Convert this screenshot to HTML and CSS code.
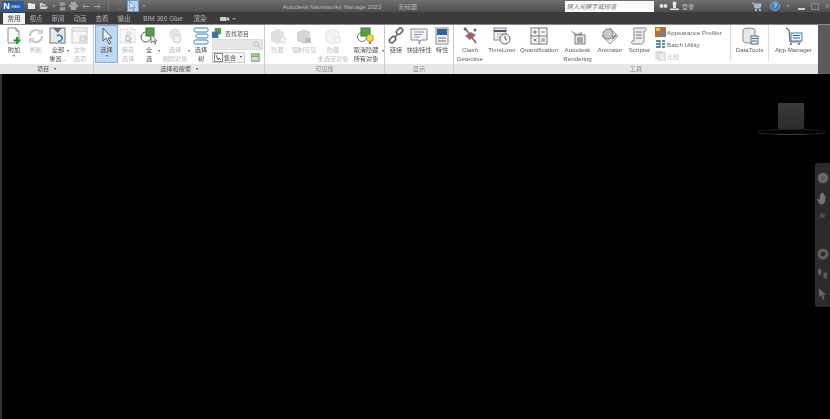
FILE: index.html
```html
<!DOCTYPE html>
<html lang="zh">
<head>
  <meta charset="UTF-8">
  <title>Autodesk Navisworks Manage 2023</title>
  <link rel="stylesheet" href="styles.css">
</head>
<body>
  <!-- Title bar -->
  <div class="titlebar">
    <div class="logo"><span class="logo-n">N</span><span class="logo-man">MAN</span></div>
    <div class="quick">
      <svg width="9" height="8" viewBox="0 0 10 9"><path d="M1 1h3l1 1h4v6H1z" fill="#e8e8e8"/></svg>
      <svg width="10" height="8" viewBox="0 0 12 9"><path d="M1 1h3l1 1h3v2H3L1 8zM3 5h8l-2 3H1z" fill="#cfcfcf"/></svg>
      <span class="dot"></span>
      <svg width="7" height="9" viewBox="0 0 9 10"><path d="M1 0h7v4H1zM1 6h7v4H1z" fill="#9a9a9a"/></svg>
      <svg width="9" height="8" viewBox="0 0 10 9"><path d="M2 0h6v3H2zM0 3h10v3H0zM2 6h6v3H2z" fill="#a5a5a5"/></svg>
      <svg class="undo" width="8" height="7" viewBox="0 0 10 8"><path d="M9 4H2M4 1 1 4l3 3" fill="none" stroke="#a8a8a8" stroke-width="1.2"/></svg>
      <svg width="8" height="7" viewBox="0 0 10 8"><path d="M1 4h7M6 1l3 3-3 3" fill="none" stroke="#a8a8a8" stroke-width="1.2"/></svg>
      <span class="qsep"></span>
      <svg width="8" height="8" viewBox="0 0 10 10"><path d="M8 2A4 4 0 0 0 1 5M2 8a4 4 0 0 0 7-3" fill="none" stroke="#777" stroke-width="1.2"/></svg>
      <span class="qselect"><svg width="7" height="10" viewBox="0 0 8 11"><path d="M1 0v9l2-2 2 4 1-1-2-3h3z" fill="#eef3f8" stroke="#45617e" stroke-width=".6"/></svg></span>
      <span class="dot small"></span>
    </div>
    <div class="apptitle">Autodesk Navisworks Manage 2023<span class="doc">无标题</span></div>
    <div class="search">键入关键字或短语</div>
    <div class="account">
      <svg width="9" height="9" viewBox="0 0 9 9"><circle cx="2.5" cy="4" r="2" fill="#ddd"/><circle cx="6.5" cy="4" r="2" fill="#ddd"/></svg>
      <svg width="9" height="10" viewBox="0 0 9 10"><circle cx="4.5" cy="2.5" r="2" fill="#e4e4e4"/><path d="M0 9h9V7.5H0zM3 4h3v3H3z" fill="#e4e4e4"/></svg>
      <span class="login">登录</span>
    </div>
    <div class="winctl">
      <svg width="10" height="9" viewBox="0 0 10 9"><path d="M0 1h2l1 5h5l1-4H3" fill="#8fb6de" stroke="#cfe0f0" stroke-width=".6"/><circle cx="4" cy="8" r="1" fill="#ddd"/><circle cx="8" cy="8" r="1" fill="#ddd"/></svg>
      <svg class="help" width="10" height="10" viewBox="0 0 11 11"><circle cx="5.5" cy="5.5" r="5" fill="#3f7fc4" stroke="#ccc" stroke-width=".6"/><text x="5.5" y="8.2" font-size="8" text-anchor="middle" fill="#fff" font-family="Liberation Sans">?</text></svg>
      <span class="dot small"></span>
      <span class="min"></span>
      <span class="max"></span>
      <span class="close">×</span>
    </div>
  </div>

  <!-- Tabs -->
  <div class="tabs">
    <span class="tab active">常用</span>
    <span class="tab">视点</span>
    <span class="tab">审阅</span>
    <span class="tab">动画</span>
    <span class="tab">查看</span>
    <span class="tab">输出</span>
    <span class="tab wide">BIM 360 Glue</span>
    <span class="tab">渲染</span>
    <span class="tab cam"><svg width="10" height="6" viewBox="0 0 12 7"><rect x="0" y="1" width="8" height="5" rx="1" fill="#ccc"/><path d="M8 3l3-2v5L8 4z" fill="#ccc"/></svg><span class="dot small"></span></span>
  </div>

  <!-- Ribbon -->
  <div class="ribbon">
    <section class="panel p-project">
      <div class="tools">
        <div class="btn w22">
          <svg class="ico" width="18" height="18" viewBox="0 0 18 18"><path d="M3 1h8l3 3v12H3z" fill="#fdfdfd" stroke="#8c8c8c"/><path d="M11 1v3h3" fill="#ddd" stroke="#8c8c8c"/><path d="M12 10v7M8.500 13.500h7" stroke="#1a9c2c" stroke-width="2.200"/></svg>
          <span>附加</span><i class="caret"></i>
        </div>
        <div class="btn w22 off">
          <svg class="ico" width="18" height="18" viewBox="0 0 18 18"><g fill="none" stroke="#c4c4c4" stroke-width="2"><path d="M3 9a6 6 0 0 1 10-4.500"/><path d="M15 9a6 6 0 0 1-10 4.500"/></g><path d="M16 1v6h-6zM2 17v-6h6z" fill="#d2d2d2"/></svg>
          <span>刷新</span>
        </div>
        <div class="btn w22">
          <svg class="ico" width="18" height="18" viewBox="0 0 18 18"><rect x="1" y="1" width="15" height="15" fill="#e9e9e9" stroke="#777"/><path d="M4 1h9l-4.500 5z" fill="#6a7480"/><path d="M9 14a3 3 0 1 0-1-5" fill="none" stroke="#2f7fc4" stroke-width="1.500"/></svg>
          <span>全部<br>重置...</span><i class="caret side"></i>
        </div>
        <div class="btn w22 off">
          <svg class="ico" width="18" height="18" viewBox="0 0 18 18"><rect x="1" y="1" width="15" height="15" fill="#f6f6f6" stroke="#c8c8c8"/><path d="M1 4h15" stroke="#d0d0d0"/><rect x="9" y="9" width="6" height="5" fill="#e2e2e2" stroke="#c8c8c8"/></svg>
          <span>文件<br>选项</span>
        </div>
      </div>
      <div class="plabel">项目 <i class="caret dark"></i></div>
    </section>

    <section class="panel p-select">
      <div class="tools">
        <div class="btn w23 selected">
          <svg class="ico" width="18" height="18" viewBox="0 0 18 18"><path d="M5 1v13l3-3 3 6 2-1-3-5h4z" fill="#eef1f4" stroke="#5a5f66"/></svg>
          <span>选择</span><i class="caret"></i>
        </div>
        <div class="btn w20 off">
          <svg class="ico" width="18" height="18" viewBox="0 0 18 18"><rect x="1" y="2" width="15" height="14" fill="#f7f7f7" stroke="#d2d2d2" stroke-dasharray="2 1"/><circle cx="10" cy="7" r="3" fill="#e4e4e4"/><path d="M7 8v7l2-2 2 3 1-1-2-3h3z" fill="#eee" stroke="#bbb"/></svg>
          <span>保存<br>选择</span>
        </div>
        <div class="btn w22">
          <svg class="ico" width="18" height="18" viewBox="0 0 18 18"><circle cx="6" cy="10" r="5" fill="#fff" stroke="#555"/><rect x="6" y="1" width="8" height="8" fill="#56a04a" stroke="#3b7a33"/><path d="M11 7v9l2-2 2 3 1-1-2-2h3z" fill="#e8e8e8" stroke="#555" stroke-width=".7"/></svg>
          <span>全<br>选</span><i class="caret side"></i>
        </div>
        <div class="btn w30 off">
          <svg class="ico" width="18" height="18" viewBox="0 0 18 18"><circle cx="9" cy="7" r="6" fill="#e6e6e6"/><circle cx="11" cy="12" r="4" fill="#efefef" stroke="#d0d0d0"/></svg>
          <span>选择<br>相同对象</span><i class="caret side"></i>
        </div>
        <div class="btn w22">
          <svg class="ico" width="18" height="18" viewBox="0 0 18 18"><rect x="2" y="1" width="14" height="4" rx="1.500" fill="#fff" stroke="#2f7fc4"/><rect x="4" y="7" width="12" height="4" rx="1.500" fill="#fff" stroke="#2f7fc4"/><rect x="2" y="13" width="14" height="4" rx="1.500" fill="#fff" stroke="#2f7fc4"/></svg>
          <span>选择<br>树</span>
        </div>
        <div class="findcol">
          <div class="findrow">
            <svg width="10" height="10" viewBox="0 0 11 11"><rect x="3" y="0" width="7" height="7" fill="#56a04a"/><rect x="0" y="4" width="7" height="7" fill="#3f6fa8"/></svg>
            <span>查找项目</span>
          </div>
          <div class="findbox"><svg width="8" height="8" viewBox="0 0 8 8"><circle cx="3" cy="3" r="2.300" fill="none" stroke="#bbb"/><path d="M5 5l3 3" stroke="#bbb"/></svg></div>
          <div class="setrow">
            <div class="setbox">
              <svg width="9" height="9" viewBox="0 0 9 9"><rect x=".5" y=".5" width="8" height="8" fill="#fff" stroke="#888"/><path d="M2 2l2 5 1-2 2 2" fill="none" stroke="#666"/></svg>
              <span>集合</span><i class="caret dark"></i>
            </div>
            <svg width="9" height="9" viewBox="0 0 10 10"><rect x="0" y="1" width="9" height="8" fill="#cfe3c8" stroke="#4d8a45"/><path d="M0 3.500h9" stroke="#4d8a45"/></svg>
          </div>
        </div>
      </div>
      <div class="plabel">选择和搜索 <i class="caret dark"></i></div>
    </section>

    <section class="panel p-vis">
      <div class="tools">
        <div class="btn w25 off">
          <svg class="ico" width="18" height="18" viewBox="0 0 18 18"><path d="M2 5l7-3 6 3v9l-6 3-7-3z" fill="#e0e0e0"/><circle cx="14" cy="13" r="3" fill="#f2f2f2" stroke="#d8d8d8"/></svg>
          <span>隐藏</span>
        </div>
        <div class="btn w28 off">
          <svg class="ico" width="18" height="18" viewBox="0 0 18 18"><path d="M2 5l7-3 6 3v9l-6 3-7-3z" fill="#d6d6d6"/><rect x="10" y="11" width="6" height="5" fill="#bdbdbd"/></svg>
          <span>强制可见</span>
        </div>
        <div class="btn w30 off">
          <svg class="ico" width="18" height="18" viewBox="0 0 18 18"><path d="M2 5l7-3 6 3v9l-6 3-7-3z" fill="#f3f3f3" stroke="#e2e2e2"/><circle cx="14" cy="13" r="3" fill="#f6f6f6" stroke="#e2e2e2"/></svg>
          <span>隐藏<br>未选定对象</span>
        </div>
        <div class="btn w36">
          <svg class="ico" width="18" height="18" viewBox="0 0 18 18"><circle cx="5" cy="10" r="4.500" fill="#fff" stroke="#777"/><rect x="4" y="1" width="9" height="8" fill="#56a04a" stroke="#3b7a33"/><circle cx="13" cy="11" r="3.500" fill="#f5dc4a" stroke="#b59a20"/><path d="M12 15h2v2h-2z" fill="#777"/></svg>
          <span>取消隐藏<br>所有对象</span><i class="caret side"></i>
        </div>
      </div>
      <div class="plabel muted">可见性</div>
    </section>

    <section class="panel p-display">
      <div class="tools">
        <div class="btn w22">
          <svg class="ico" width="18" height="18" viewBox="0 0 18 18"><g fill="none" stroke="#666" stroke-width="1.600"><rect x="9" y="2" width="7" height="4.500" rx="2.200" transform="rotate(-45 12.500 4.200)"/><rect x="2" y="10.500" width="7" height="4.500" rx="2.200" transform="rotate(-45 5.500 12.700)"/><path d="M7.500 10.500l3-3"/></g></svg>
          <span>链接</span>
        </div>
        <div class="btn w24">
          <svg class="ico" width="18" height="18" viewBox="0 0 18 18"><path d="M1 2h16v11h-6l-2 4v-4H1z" fill="#f4f4f4" stroke="#8a8a8a"/><path d="M4 5h10M4 7.500h8M4 10h6" stroke="#7fa0bf"/></svg>
          <span>快捷特性</span>
        </div>
        <div class="btn w22">
          <svg class="ico" width="18" height="18" viewBox="0 0 18 18"><rect x="3" y="1" width="12" height="16" fill="#f4f4f4" stroke="#888"/><rect x="4" y="2" width="10" height="6" fill="#2f62a8"/><path d="M5 11h8M5 14h8" stroke="#666"/></svg>
          <span>特性</span>
        </div>
      </div>
      <div class="plabel muted">显示</div>
    </section>

    <section class="panel p-tools">
      <div class="tools">
        <div class="btn w32 en">
          <svg class="ico" width="18" height="18" viewBox="0 0 18 18"><path d="M4 1l11 15" stroke="#666" stroke-width="1.500"/><path d="M4 9l6-4 5 3-6 5z" fill="#7a7a7a"/><circle cx="9" cy="9" r="2" fill="#d8433a"/><circle cx="4" cy="2" r="1.500" fill="#666"/><circle cx="14" cy="3" r="1.500" fill="#666"/></svg>
          <span>Clash<br>Detective</span>
        </div>
        <div class="btn w32 en">
          <svg class="ico" width="18" height="18" viewBox="0 0 18 18"><rect x="1" y="1" width="12" height="12" fill="#f2f2f2" stroke="#888"/><path d="M1 4h12" stroke="#556" stroke-width="2"/><path d="M4 7h7M4 10h5" stroke="#aaa"/><circle cx="12" cy="12" r="5" fill="#f7f7f7" stroke="#666"/><path d="M12 9v3l2 1" fill="none" stroke="#555"/></svg>
          <span>TimeLiner</span>
        </div>
        <div class="btn w42 en">
          <svg class="ico" width="18" height="18" viewBox="0 0 18 18"><rect x="1" y="1" width="16" height="16" fill="#fafafa" stroke="#777"/><path d="M9 1v16M1 9h16" stroke="#777"/><path d="M3 5h4M5 3v4M11 5h4M3.500 11.500l3 3M6.500 11.500l-3 3M11 12h4M11 14h4" stroke="#555" stroke-width=".8"/></svg>
          <span>Quantification</span>
        </div>
        <div class="btn w35 en">
          <svg class="ico" width="18" height="18" viewBox="0 0 18 18"><path d="M1 3l7 4 5-2v3H6z" fill="#9a9a9a"/><rect x="6" y="8" width="10" height="9" fill="#ececec" stroke="#777"/><path d="M8 11h6M8 13h6M8 15h6" stroke="#666"/></svg>
          <span>Autodesk<br>Rendering</span>
        </div>
        <div class="btn w30 en">
          <svg class="ico" width="18" height="18" viewBox="0 0 18 18"><path d="M9 1l8 8-8 8-8-8z" fill="#e6e6e6" stroke="#999"/><circle cx="7" cy="7" r="5" fill="#c8c8c8" stroke="#888"/><path d="M11 12l4-4" stroke="#777" stroke-width="1.500"/></svg>
          <span>Animator</span>
        </div>
        <div class="btn w29 en">
          <svg class="ico" width="18" height="18" viewBox="0 0 18 18"><path d="M3 1h11c2 0 2 3 0 3h-1v10c0 2-1 3-3 3H2c-2 0-2-3 0-3h1V4c-1 0-1-3 0-3z" fill="#eee" stroke="#888"/><path d="M5 5h6M5 8h6M5 11h6" stroke="#777"/></svg>
          <span>Scripter</span>
        </div>
        <div class="listcol">
          <div class="listrow"><svg width="11" height="10" viewBox="0 0 11 10"><rect width="11" height="10" fill="#b0713a"/><rect x="1" y="1" width="4" height="3" fill="#f0c050"/><rect x="6" y="5" width="4" height="4" fill="#5a86c0"/></svg><span>Appearance Profiler</span></div>
          <div class="listrow"><svg width="11" height="10" viewBox="0 0 11 10"><path d="M1 2h4M1 5h4M1 8h4M7 2h3M7 5h3M7 8h3" stroke="#2f62a8" stroke-width="1.300"/><path d="M5 1v8" stroke="#2a8a3a"/></svg><span>Batch Utility</span></div>
          <div class="listrow off"><svg width="11" height="10" viewBox="0 0 11 10"><rect x="1" y="0" width="6" height="8" fill="#e8e8e8" stroke="#ccc"/><rect x="4" y="2" width="6" height="8" fill="#eee" stroke="#ccc"/></svg><span>比较</span></div>
        </div>
        <div class="btn w38 en divided">
          <svg class="ico" width="18" height="18" viewBox="0 0 18 18"><ellipse cx="8" cy="3" rx="6" ry="2" fill="#ddd" stroke="#888"/><path d="M2 3v11c0 2.600 12 2.600 12 0V3" fill="#e8e8e8" stroke="#888"/><rect x="10" y="9" width="7" height="8" fill="#f4f4f4" stroke="#3f6f98"/><path d="M11 11.500h5M11 14h5" stroke="#3f6f98"/></svg>
          <span>DataTools</span>
        </div>
        <div class="btn w50 en divided">
          <svg class="ico" width="18" height="18" viewBox="0 0 18 18"><path d="M1 1l3 2 1 12h11" fill="none" stroke="#666" stroke-width="1.200"/><rect x="6" y="6" width="11" height="8" fill="#eef3f8" stroke="#3f7fa8"/><path d="M8 8.500h7M8 11h7" stroke="#2f62a8"/><circle cx="6" cy="17" r="1" fill="#666"/><circle cx="14" cy="17" r="1" fill="#666"/></svg>
          <span>App Manager</span>
        </div>
      </div>
      <div class="plabel muted">工具</div>
    </section>
  </div>

  <!-- 3D view -->
  <main class="viewport">
    <div class="viewcube">
      <div class="cube"></div>
      <div class="compass"></div>
    </div>
    <div class="navbar">
      <svg width="12" height="12" viewBox="0 0 13 13"><circle cx="6.500" cy="6.500" r="6" fill="#5a5a5a"/><circle cx="6.500" cy="6.500" r="3.500" fill="none" stroke="#747474" stroke-width="1.500"/></svg>
      <svg width="12" height="13" viewBox="0 0 13 14"><path d="M3 8V3l1 0v3V1.500h1.200V6V.8h1.200V6V1.500h1.200V7V3.500H9V9c0 3-2 4.500-4 4.500S2 12 1 9.500L0 7.500c.6-.6 1.500-.3 2 .5z" fill="#747474"/></svg>
      <span class="navdot"></span>
      <svg class="gap" width="12" height="12" viewBox="0 0 13 13"><circle cx="6.500" cy="6.500" r="6" fill="#5f5f54"/><circle cx="6.500" cy="6.500" r="2.500" fill="#2c2c2c"/></svg>
      <svg width="11" height="12" viewBox="0 0 12 13"><ellipse cx="3" cy="4" rx="2" ry="3.500" fill="#5e5e5e"/><ellipse cx="9" cy="8" rx="2" ry="3.500" fill="#5e5e5e"/></svg>
      <svg width="9" height="12" viewBox="0 0 10 13"><path d="M1 0v10l2.500-2 2 5 2-1-2-4.500H9z" fill="#666"/></svg>
    </div>
  </main>
</body>
</html>
```

FILE: styles.css
```css
/* Global box sizing */
*, *::before, *::after {
  box-sizing: border-box;
}
html, body {
  height: 100%;
}
body {
  margin: 0;
  background: #000;
  display: flex;
  flex-direction: column;
  overflow: hidden;
  font-family: "Liberation Sans", "Noto Sans CJK SC", sans-serif;
  font-size: 6.5px;
  color: #555;
}
/* The source capture is soft, so the chrome is softened a little too */
.titlebar, .tabs, .ribbon {
  filter: blur(0.35px);
}

/* Title bar */
.titlebar {
  height: 12px;
  flex: none;
  display: flex;
  align-items: center;
  background: linear-gradient(#707070, #4e4e4e);
  color: #c8c8c8;
}
.logo {
  display: flex;
  align-items: center;
  width: 22px;
  height: 11px;
  margin-left: 2px;
  background: #2c5aa0;
}
.logo-n {
  width: 9px;
  color: #fff;
  font-size: 9px;
  font-weight: bold;
  text-align: center;
}
.logo-man {
  color: #dfe8f4;
  font-size: 4px;
}
.quick {
  width: 120px;
  margin-left: 3px;
  display: flex;
  align-items: center;
  gap: 3px;
}
.quick > * {
  flex: none;
}
.dot {
  width: 0;
  height: 0;
  border: 2px solid transparent;
  border-top-color: #999;
  margin-top: 2px;
}
.undo {
  margin-left: 1px;
}
.qsep {
  width: 1px;
  height: 10px;
  background: #777;
  margin: 0 4px;
}
.qselect {
  width: 12px;
  height: 12px;
  display: flex;
  align-items: center;
  justify-content: center;
  background: #b9d2ec;
  border: 1px solid #6f9bc8;
}
.apptitle {
  width: 425px;
  padding-left: 137px;
  font-size: 6.2px;
  white-space: nowrap;
  color: #b9b9b9;
}
.doc {
  margin-left: 17px;
}
.search {
  width: 91px;
  height: 11px;
  padding-left: 2px;
  background: #fbfbfb;
  color: #777;
  line-height: 11px;
  font-size: 6.2px;
  font-style: italic;
}
.account {
  display: flex;
  align-items: center;
  gap: 2px;
  margin-left: 5px;
  width: 95px;
}
.login {
  margin-left: 1px;
  color: #bbb;
  font-size: 6.2px;
}
.winctl {
  display: flex;
  align-items: center;
  gap: 6px;
}
.help {
  margin-left: 2px;
}
.min {
  width: 7px;
  height: 2px;
  margin: 5px 0 0 2px;
  background: #ccc;
}
.max {
  width: 8px;
  height: 7px;
  border: 1px solid #888;
}
.close {
  color: #999;
  font-size: 9px;
}

/* Tabs */
.tabs {
  height: 12px;
  flex: none;
  display: flex;
  align-items: flex-end;
  padding-left: 3px;
  background: #3c3c3c;
}
.tab {
  width: 22px;
  height: 11px;
  line-height: 11px;
  text-align: center;
  font-size: 6.5px;
  color: #b5b5b5;
}
.tab.active {
  background: #f2f2f2;
  color: #444;
}
.tab.wide {
  width: 46px;
  margin: 0 3px 0 5px;
  white-space: nowrap;
}
.tab.cam {
  display: flex;
  align-items: center;
  justify-content: center;
  gap: 2px;
  margin-left: 6px;
}

/* Ribbon */
.ribbon {
  height: 50px;
  flex: none;
  display: flex;
  background: #5b5b5b;
  border-top: 1px solid #8a8a8a;
}
.panel {
  display: flex;
  flex-direction: column;
  background: #fff;
  border-right: 1px solid #c9c9c9;
}
.p-project { width: 94px; padding-left: 3px; }
.p-select { width: 171px; padding-left: 1px; }
.p-vis { width: 120px; }
.p-display { width: 69px; }
.p-tools { width: 364px; border-right: 0; }
.tools {
  flex: 1;
  display: flex;
  min-height: 0;
}
.plabel {
  height: 10px;
  margin-left: -3px;
  line-height: 10px;
  text-align: center;
  background: #e6e6e6;
  color: #555;
  font-size: 6.2px;
}
.p-select .plabel { margin-left: -1px; }
.p-vis .plabel, .p-display .plabel, .p-tools .plabel { margin-left: 0; }
.plabel.muted {
  color: #888;
}
.btn {
  position: relative;
  display: flex;
  flex-direction: column;
  align-items: center;
  padding-top: 2px;
  text-align: center;
  line-height: 9px;
  font-size: 6.2px;
  white-space: nowrap;
  color: #505050;
}
.btn .ico {
  flex: none;
}
.btn.en {
  color: #5c5c5c;
}
.btn.off {
  color: #bdbdbd;
}
.btn.selected {
  background: #c0d9f2;
  border: 1px solid #7fb0de;
  padding-top: 1px;
  margin-bottom: 1px;
}
.btn.divided {
  border-left: 1px solid #dcdcdc;
  margin-bottom: 3px;
}
.w20 { width: 20px; }
.w22 { width: 22px; }
.w23 { width: 23px; }
.w24 { width: 24px; }
.w25 { width: 25px; }
.w28 { width: 28px; }
.w29 { width: 29px; }
.w30 { width: 30px; }
.w32 { width: 32px; }
.w35 { width: 35px; }
.w36 { width: 36px; }
.w38 { width: 38px; }
.w42 { width: 42px; }
.w50 { width: 50px; }
.caret {
  display: block;
  width: 0;
  height: 0;
  margin-top: 1px;
  border: 1.5px solid transparent;
  border-top: 2px solid #555;
  border-bottom: 0;
}
.caret.side {
  position: absolute;
  right: 0;
  bottom: 12px;
}
.caret.dark {
  display: inline-block;
  margin: 0 0 1px 3px;
  border-top-color: #333;
}

/* Find items column */
.findcol {
  width: 52px;
  display: flex;
  flex-direction: column;
  gap: 1px;
  padding-top: 3px;
}
.findrow, .setrow, .setbox {
  display: flex;
  align-items: center;
  gap: 3px;
  white-space: nowrap;
}
.findrow {
  height: 10px;
  font-size: 6px;
}
.findbox {
  width: 51px;
  height: 11px;
  display: flex;
  align-items: center;
  justify-content: flex-end;
  padding-right: 1px;
  background: #e6e6e6;
  border: 1px solid #ddd;
}
.setrow {
  gap: 6px;
  margin-top: 1px;
}
.setbox {
  width: 33px;
  height: 11px;
  padding-left: 1px;
  gap: 1px;
  font-size: 6px;
  background: #f2f2f2;
  border: 1px solid #ccc;
}

/* Tools list column */
.listcol {
  width: 76px;
  display: flex;
  flex-direction: column;
  gap: 2px;
  padding: 2px 0 0 1px;
}
.listrow {
  height: 10px;
  display: flex;
  align-items: center;
  gap: 1px;
  font-size: 6.2px;
  white-space: nowrap;
  color: #666;
}
.listrow.off {
  color: #c4c4c4;
}

/* 3D view */
.viewport {
  flex: 1;
  position: relative;
  background: #000;
  border-left: 2px solid #333;
}
.viewcube {
  position: absolute;
  top: 29px;
  right: 2px;
  width: 74px;
  display: flex;
  flex-direction: column;
  align-items: center;
}
.cube {
  width: 26px;
  height: 26px;
  background: linear-gradient(#3a3a3a, #2c2c2c);
}
.compass {
  width: 70px;
  height: 6px;
  border: 1px solid #222;
  border-bottom-color: #3c3c3c;
  border-radius: 50%;
}
.navbar {
  position: absolute;
  top: 89px;
  right: 0;
  width: 15px;
  height: 144px;
  display: flex;
  flex-direction: column;
  align-items: center;
  gap: 8px;
  padding-top: 9px;
  background: #2b2b2b;
  border-radius: 2px 0 0 2px;
}
.navdot {
  width: 5px;
  height: 5px;
  border-radius: 50%;
  background: #4d4d4d;
}
.navbar .gap {
  margin-top: 22px;
}
```
